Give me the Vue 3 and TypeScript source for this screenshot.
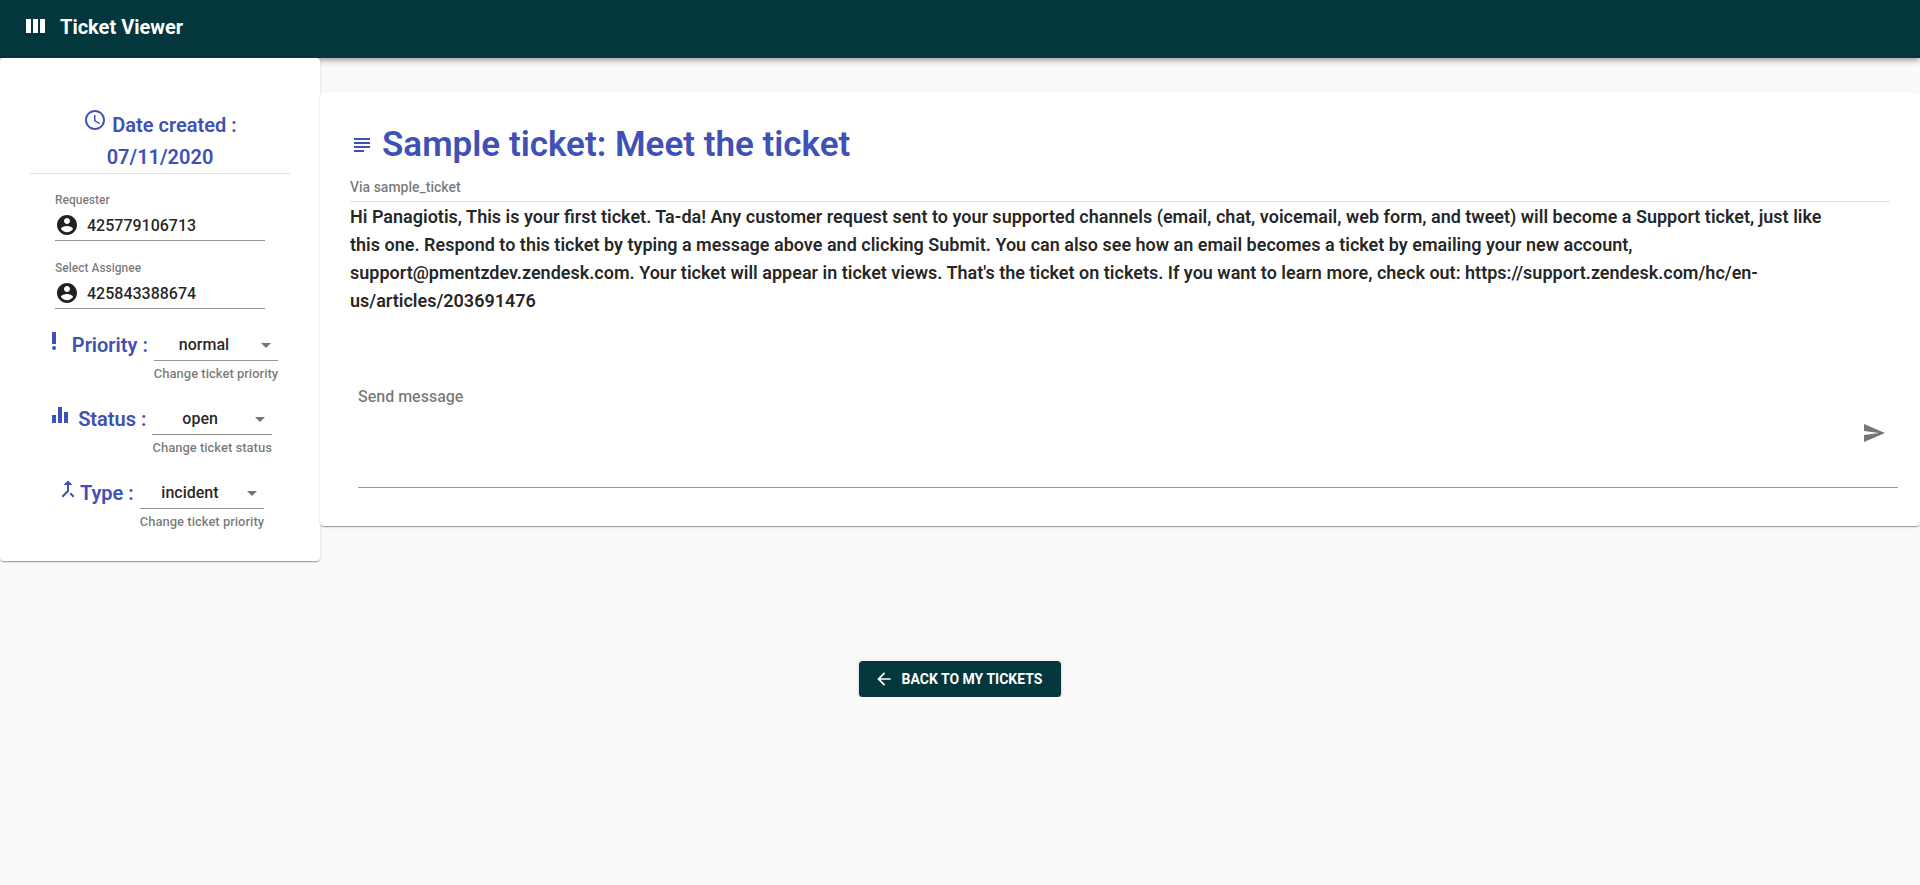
<script setup lang="ts">
import { ref } from 'vue'

interface Person {
  id: string
  label: string
  value: string
}

interface Choice {
  id: string
  title: string
  icon: string
  tight: boolean
  helper: string
  value: string
  options: string[]
}

const people = ref<Person[]>([
  { id: 'requester', label: 'Requester', value: '425779106713' },
  { id: 'assignee', label: 'Select Assignee', value: '425843388674' },
])

const choices = ref<Choice[]>([
  {
    id: 'priority',
    title: 'Priority :',
    icon: 'M10 3h4v12h-4z M12 17a2 2 0 1 0 0 4a2 2 0 1 0 0-4z',
    tight: false,
    helper: 'Change ticket priority',
    value: 'normal',
    options: ['low', 'normal', 'high', 'urgent'],
  },
  {
    id: 'status',
    title: 'Status :',
    icon: 'M10 20h4V4h-4v16zm-6 0h4v-8H4v8zM16 9v11h4V9h-4z',
    tight: false,
    helper: 'Change ticket status',
    value: 'open',
    options: ['open', 'pending', 'solved'],
  },
  {
    id: 'type',
    title: 'Type :',
    icon: 'M17 20.41L18.41 19 15 15.59 13.59 17 17 20.41zM7.5 8H11v5.59L5.59 19 7 20.41l6-6V8h3.5L12 3.5 7.5 8z',
    tight: true,
    helper: 'Change ticket priority',
    value: 'incident',
    options: ['incident', 'problem', 'question', 'task'],
  },
])

const message = ref('')
</script>

<template>
  <div class="page">
    <header class="bar">
      <svg class="icon" viewBox="0 0 24 24" aria-hidden="true">
        <path d="M3 4h5v14H3z M10 4h5v14h-5z M17 4h5v14h-5z" />
      </svg>
      <h1 class="brand">Ticket Viewer</h1>
    </header>

    <div class="columns">
      <aside class="card side">
        <h2 class="heading created">
          <svg class="icon" viewBox="0 0 24 24" aria-hidden="true">
            <path d="M11.99 2C6.47 2 2 6.48 2 12s4.47 10 9.99 10C17.52 22 22 17.52 22 12S17.52 2 11.99 2zM12 20c-4.42 0-8-3.58-8-8s3.58-8 8-8 8 3.58 8 8-3.58 8-8 8z M12.5 7H11v6l5.25 3.15.75-1.23-4.5-2.67z" />
          </svg>
          Date created :<br />07/11/2020
        </h2>
        <div class="people">
          <div v-for="p in people" :key="p.id" class="person">
            <label :for="p.id">{{ p.label }}</label>
            <div class="person-line">
              <svg class="icon" viewBox="0 0 24 24" aria-hidden="true">
                <path d="M12 2C6.48 2 2 6.48 2 12s4.48 10 10 10 10-4.48 10-10S17.52 2 12 2zm0 3c1.66 0 3 1.34 3 3s-1.34 3-3 3-3-1.34-3-3 1.34-3 3-3zm0 14.2c-2.5 0-4.71-1.28-6-3.22.03-1.99 4-3.08 6-3.08 1.99 0 5.97 1.09 6 3.08-1.29 1.94-3.5 3.22-6 3.22z" />
              </svg>
              <input :id="p.id" v-model="p.value" type="text" />
            </div>
          </div>
        </div>
        <div v-for="c in choices" :key="c.id" class="choice">
          <svg class="icon" viewBox="0 0 24 24" aria-hidden="true">
            <path :d="c.icon" />
          </svg>
          <label class="heading" :class="{ tight: c.tight }" :for="c.id">{{ c.title }}</label>
          <div class="field">
            <div class="select-line">
              <select :id="c.id" v-model="c.value">
                <option v-for="o in c.options" :key="o">{{ o }}</option>
              </select>
              <svg class="icon arrow" viewBox="0 0 24 24" aria-hidden="true">
                <path d="M7 10l5 5 5-5z" />
              </svg>
            </div>
            <span class="helper">{{ c.helper }}</span>
          </div>
        </div>
      </aside>

      <main class="card ticket">
        <div class="title-row">
          <svg class="icon" viewBox="0 0 24 24" aria-hidden="true">
            <path d="M14 17H4v2h10v-2zm6-8H4v2h16V9zM4 15h16v-2H4v2zM4 5v2h16V5H4z" />
          </svg>
          <h2 class="title">Sample ticket: Meet the ticket</h2>
        </div>
        <p class="via">Via sample_ticket</p>
        <p class="body">
          Hi Panagiotis, This is your first ticket. Ta-da! Any customer request sent to your supported channels (email, chat, voicemail, web form, and tweet) will become a Support ticket, just like this one. Respond to this ticket by typing a message above and clicking Submit. You can also see how an email becomes a ticket by emailing your new account, support@pmentzdev.zendesk.com. Your ticket will appear in ticket views. That's the ticket on tickets. If you want to learn more, check out: https://support.zendesk.com/hc/en-us/articles/203691476
        </p>
        <form class="message" @submit.prevent="message = ''">
          <textarea v-model="message" rows="4" placeholder="Send message" aria-label="Send message"></textarea>
          <button class="send" type="submit" aria-label="Send">
            <svg class="icon" viewBox="0 0 24 24" aria-hidden="true">
              <path d="M2.01 21L23 12 2.01 3 2 10l15 2-15 2z" />
            </svg>
          </button>
        </form>
      </main>
    </div>

    <button class="back" type="button">
      <svg viewBox="0 0 24 24" aria-hidden="true">
        <path d="M20 11H7.83l5.59-5.59L12 4l-8 8 8 8 1.41-1.41L7.83 13H20v-2z" />
      </svg>
      BACK TO MY TICKETS
    </button>
  </div>
</template>

<style>
body {
  margin: 0;
  background: #fafafa;
}
</style>

<style scoped>
.page {
  display: flex;
  flex-direction: column;
  font-family: Roboto, "Liberation Sans", sans-serif;
  font-weight: 500;
  font-size: 16px;
  color: rgba(0, 0, 0, 0.87);
}

.page *,
.page {
  box-sizing: border-box;
}

input,
select,
textarea,
button {
  margin: 0;
  padding: 0;
  border: 0;
  outline: 0;
  background: none;
  border-radius: 0;
  font: inherit;
  color: inherit;
}

.icon {
  width: 24px;
  height: 24px;
  flex: none;
  fill: currentColor;
}

.bar {
  display: flex;
  align-items: center;
  gap: 13px;
  height: 58px;
  padding: 0 23px 4px;
  background: #03363d;
  color: #fff;
  box-shadow: 0 2px 4px -1px rgba(0, 0, 0, 0.2), 0 4px 5px rgba(0, 0, 0, 0.14), 0 1px 10px rgba(0, 0, 0, 0.12);
}

.brand {
  margin: 0;
  font-size: 20px;
  line-height: 32px;
  font-weight: 700;
}

.columns {
  display: grid;
  grid-template-columns: minmax(0, 1fr) minmax(0, 5fr);
  align-items: start;
  position: relative;
}

.card {
  background: #fff;
  border-radius: 4px;
  box-shadow: 0 2px 1px -1px rgba(0, 0, 0, 0.2), 0 1px 1px rgba(0, 0, 0, 0.14), 0 1px 3px rgba(0, 0, 0, 0.12);
}

.side {
  padding: 50px 30px 10px;
}

.heading {
  margin: 0;
  color: #3f51b5;
  font-size: 20px;
  line-height: 32px;
  font-weight: 600;
}

.created {
  text-align: center;
  border-bottom: 1px solid #e0e0e0;
}

.people {
  display: flex;
  flex-direction: column;
  gap: 19px;
  padding: 0 25px;
  margin: 18px 0 20px;
}

.person {
  display: flex;
  flex-direction: column;
}

.person label {
  font-size: 12px;
  line-height: 16px;
  color: rgba(0, 0, 0, 0.54);
}

.person-line {
  display: flex;
  align-items: center;
  gap: 8px;
  height: 33px;
  padding-top: 2px;
  border-bottom: 1px solid #949494;
}

.person-line input {
  flex: 1;
  min-width: 0;
}

.choice {
  display: flex;
  justify-content: center;
  align-items: flex-start;
  height: 56px;
  margin-bottom: 18px;
  white-space: nowrap;
}

.choice .icon {
  color: #3f51b5;
}

.choice .heading {
  margin: 0 6px;
}

.choice .tight {
  margin-left: 0;
}

.field {
  display: flex;
  flex-direction: column;
  gap: 3px;
}

.select-line {
  display: grid;
  align-items: center;
  border-bottom: 1px solid #949494;
}

.select-line select {
  grid-area: 1 / 1;
  appearance: none;
  width: 100%;
  height: 31px;
  padding-right: 24px;
  text-align: center;
  text-align-last: center;
}

.select-line .arrow {
  grid-area: 1 / 1;
  justify-self: end;
  color: rgba(0, 0, 0, 0.54);
  pointer-events: none;
}

.helper {
  font-size: 13px;
  line-height: 20px;
  color: rgba(0, 0, 0, 0.54);
}

.ticket {
  margin-top: 34px;
  padding: 29px 30px 38px;
}

.title-row {
  display: flex;
  align-items: center;
  gap: 8px;
  height: 48px;
  color: #3f51b5;
}

.title {
  margin: 0;
  font-size: 35px;
  line-height: 48px;
  font-weight: 600;
}

.via {
  margin: 0;
  padding: 8px 0 3px;
  border-bottom: 1px solid #e0e0e0;
  font-size: 14px;
  line-height: 21px;
  color: rgba(0, 0, 0, 0.54);
}

.body {
  margin: 0;
  padding: 1px 48px 2px 0;
  font-size: 18px;
  line-height: 28px;
  font-weight: 600;
}

.message {
  display: flex;
  align-items: center;
  margin: 61px -8px 0 8px;
  border-bottom: 1px solid #949494;
}

.message textarea {
  flex: 1;
  height: 109px;
  padding: 7px 0;
  line-height: 24px;
  resize: none;
}

.message textarea::placeholder {
  color: rgba(0, 0, 0, 0.54);
  opacity: 1;
}

.send {
  display: flex;
  padding: 12px;
  color: rgba(0, 0, 0, 0.54);
  cursor: pointer;
}

.back {
  display: flex;
  align-items: center;
  align-self: center;
  justify-content: center;
  gap: 8px;
  min-width: 202px;
  margin-top: 100px;
  padding: 6px 16px 6px 12px;
  border-radius: 4px;
  background: #03363d;
  color: #fff;
  font-size: 14px;
  line-height: 24px;
  font-weight: 700;
  cursor: pointer;
  box-shadow: 0 3px 1px -2px rgba(0, 0, 0, 0.2), 0 2px 2px rgba(0, 0, 0, 0.14), 0 1px 5px rgba(0, 0, 0, 0.12);
}

.back svg {
  width: 20px;
  height: 20px;
  fill: currentColor;
}
</style>
